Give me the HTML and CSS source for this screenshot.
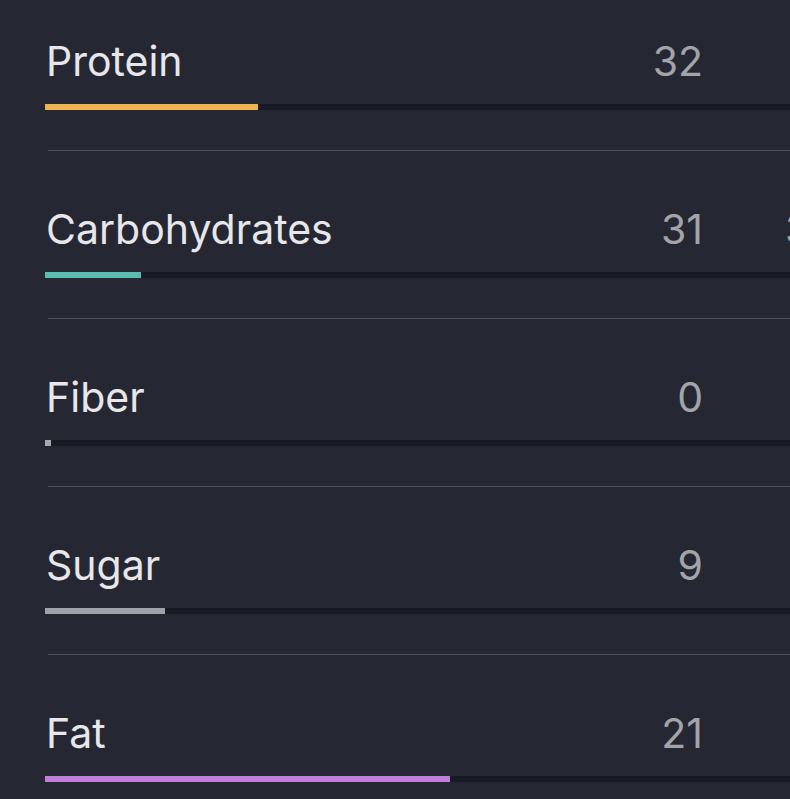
FILE: index.html
```html
<!DOCTYPE html>
<html lang="en">
<head>
    <meta charset="UTF-8">
    <meta name="viewport" content="width=device-width, initial-scale=1.0">
    <title>Nutrition</title>
    <link rel="stylesheet" href="styles.css">
</head>
<body>
    <!-- Nutrient list -->
    <div class="nutrients">
        <div class="row">
            <span class="label">Protein</span>
            <span class="value">32</span>
            <span class="extra"></span>
            <div class="track"><div class="fill protein" style="width: 213px"></div></div>
        </div>
        <div class="row">
            <span class="label">Carbohydrates</span>
            <span class="value">31</span>
            <span class="extra">3</span>
            <div class="track"><div class="fill carbs" style="width: 96px"></div></div>
        </div>
        <div class="row">
            <span class="label">Fiber</span>
            <span class="value">0</span>
            <span class="extra"></span>
            <div class="track"><div class="fill fiber" style="width: 6px"></div></div>
        </div>
        <div class="row">
            <span class="label">Sugar</span>
            <span class="value">9</span>
            <span class="extra"></span>
            <div class="track"><div class="fill sugar" style="width: 120px"></div></div>
        </div>
        <div class="row">
            <span class="label">Fat</span>
            <span class="value">21</span>
            <span class="extra"></span>
            <div class="track"><div class="fill fat" style="width: 405px"></div></div>
        </div>
    </div>
</body>
</html>
```

FILE: styles.css
```css
body {
    margin: 0;
    padding: 0;
    background-color: #252833;
    font-family: Inter, "Noto Sans", sans-serif;
    overflow: hidden;
    height: 100vh;
}

/* List scrolled a bit past the top */
.nutrients {
    margin-top: -17px;
}

.row {
    display: grid;
    grid-template-columns: 1fr auto 87px;
    padding: 54px 0 40px 45px;
    border-bottom: 1px solid transparent;
    position: relative;
}

/* Separator is inset from the left */
.row::after {
    content: "";
    position: absolute;
    left: 48px;
    right: 0;
    bottom: -1px;
    height: 1px;
    background-color: #4c4f58;
}

.label {
    font-size: 41px;
    line-height: 48px;
    color: #e7e7ea;
    padding-left: 1px;
}

.value {
    font-size: 41px;
    line-height: 48px;
    color: #a3a4a8;
    text-align: right;
}

.extra {
    font-size: 41px;
    line-height: 48px;
    color: #a3a4a8;
    padding-left: 82px;
    white-space: nowrap;
}

/* Progress bar */
.track {
    grid-column: 1 / 4;
    margin-top: 19px;
    height: 6px;
    background-color: #181a24;
}

.fill {
    height: 100%;
}

.protein { background-color: #f1b350; }
.carbs { background-color: #5bbcb2; }
.fiber { background-color: #a8a9ad; }
.sugar { background-color: #a0a1a5; }
.fat { background-color: #c07edd; }
```
